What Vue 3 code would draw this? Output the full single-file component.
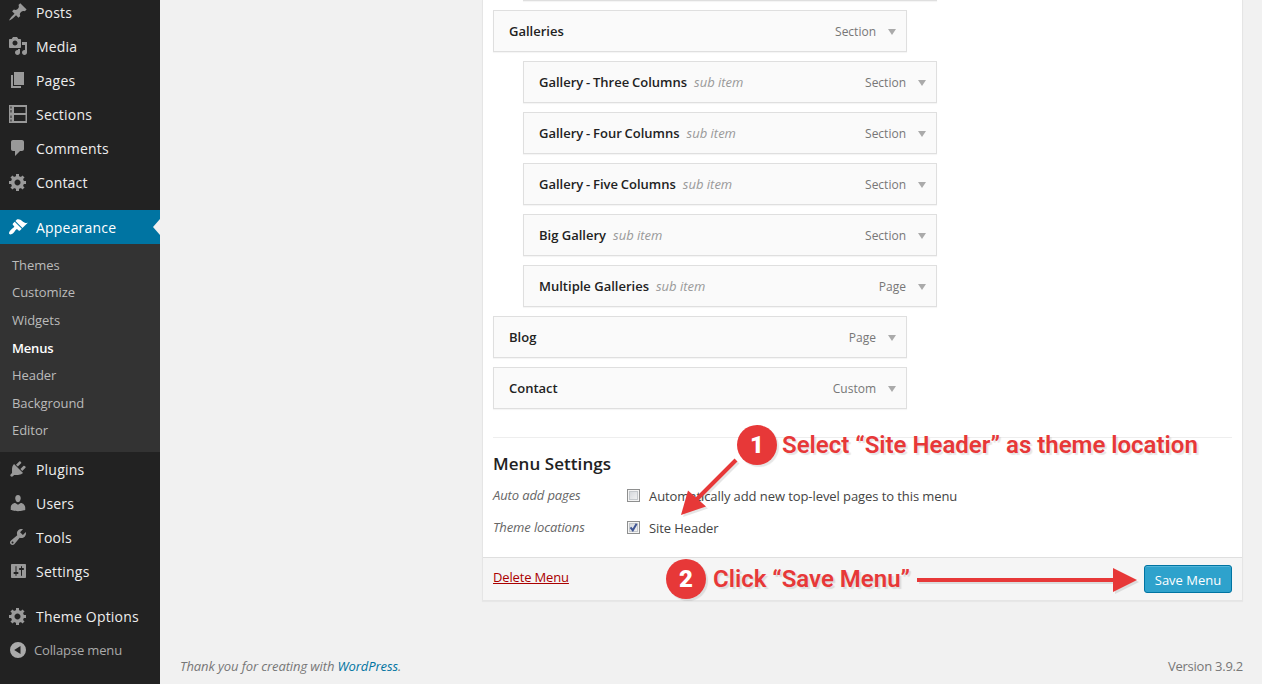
<script setup>
const icons = {
  pin: 'M10.44 3.02l1.82-1.82 6.36 6.35-1.83 1.82c-1.05-.68-2.48-.57-3.41.36l-.75.75c-.92.93-1.04 2.35-.35 3.41l-1.83 1.82-2.41-2.41-2.8 2.79c-.42.42-3.38 2.71-3.8 2.29s1.86-3.39 2.28-3.81l2.79-2.79L4.1 9.36l1.83-1.82c1.05.69 2.48.57 3.4-.36l.75-.75c.93-.92 1.05-2.35.36-3.41z',
  media: 'M13 11V4c0-.55-.45-1-1-1h-1.67L9 1H5L3.67 3H2c-.55 0-1 .45-1 1v7c0 .55.45 1 1 1h10c.55 0 1-.45 1-1zM7 4.5c1.38 0 2.5 1.12 2.5 2.5S8.38 9.5 7 9.5 4.5 8.38 4.5 7 5.62 4.5 7 4.5zM14 6h5v10.5c0 1.38-1.12 2.5-2.5 2.5S14 17.88 14 16.5s1.12-2.5 2.5-2.5c.17 0 .34.02.5.05V9h-3V6zm-4 8.05V13h2v3.5c0 1.38-1.12 2.5-2.5 2.5S7 17.88 7 16.5 8.12 14 9.5 14c.17 0 .34.02.5.05z',
  page: 'M6 15V2h10v13H6zm-1 1h8v2H3V5h2v11z',
  sections: 'M1 1h18v18H1zM2.500 2.500v2h1v-2zM2.500 15.500v2h1v-2zM2.500 6v2.500h1v-2.500zM2.500 11.500v2.500h1v-2.500zM6 3v6h11.500v-6zM6 11v6h11.500v-6z',
  comment: 'M5 2h9c1.1 0 2 .9 2 2v7c0 1.1-.9 2-2 2h-2l-5 5v-5H5c-1.1 0-2-.9-2-2V4c0-1.1.9-2 2-2z',
  gear: 'M18 12h-2.18c-.17.7-.44 1.35-.81 1.93l1.54 1.54-2.1 2.1-1.54-1.54c-.58.36-1.23.63-1.91.79V19H8v-2.18c-.68-.16-1.33-.43-1.91-.79l-1.54 1.54-2.12-2.12 1.54-1.54c-.36-.58-.63-1.23-.79-1.91H1V9.03h2.17c.16-.7.44-1.35.8-1.94L2.43 5.55l2.1-2.1 1.54 1.54c.58-.37 1.24-.64 1.93-.81V2h3v2.18c.68.16 1.33.43 1.91.79l1.54-1.54 2.12 2.12-1.54 1.54c.36.59.64 1.24.8 1.94H18V12zm-8.5 1.5c1.66 0 3-1.34 3-3s-1.34-3-3-3-3 1.34-3 3 1.34 3 3 3z',
  brush: 'M14.48 11.06L7.41 3.99l1.5-1.5c.5-.56 2.3-.47 3.51.32 1.21.8 1.43 1.28 2.91 2.1 1.18.64 2.45 1.26 4.45.85zm-.71.71L6.7 4.7 4.93 6.47c-.39.39-.39 1.02 0 1.41l1.06 1.06c.39.39.39 1.03 0 1.42-.6.6-1.43 1.11-2.21 1.69-.35.26-.7.53-1.01.84C1.43 14.23.4 16.08 1.4 17.07c.99 1 2.84-.03 4.18-1.36.31-.31.58-.66.85-1.02.57-.78 1.08-1.61 1.69-2.21.39-.39 1.02-.39 1.41 0l1.06 1.06c.39.39 1.02.39 1.41 0z',
  plug: 'M13.11 4.36L9.87 7.6 8 5.73l3.24-3.24c.35-.34 1.05-.2 1.56.32.52.51.66 1.21.31 1.55zm-8 1.77l.91-1.12 9.01 9.01-1.19.84c-.71.71-2.63 1.16-3.82 1.16H6.14L4.9 17.26c-.59.59-1.54.59-2.12 0-.59-.58-.59-1.53 0-2.12l1.24-1.24v-3.88c0-1.13.4-3.19 1.09-3.89zm7.26 3.97l3.24-3.24c.34-.35 1.04-.21 1.55.31.52.51.66 1.21.31 1.55l-3.24 3.25z',
  user: 'M10 9.25c-2.27 0-2.73-3.44-2.73-3.44C7 4.02 7.82 2 9.97 2c2.16 0 2.98 2.02 2.71 3.81 0 0-.41 3.44-2.68 3.44zm0 2.57L12.72 10c2.39 0 4.52 2.33 4.52 4.53v2.49s-3.65 1.13-7.24 1.13c-3.65 0-7.24-1.13-7.24-1.13v-2.49c0-2.25 1.94-4.48 4.47-4.48z',
  wrench: 'M16.68 9.77c-1.34 1.34-3.3 1.67-4.95.99l-5.41 6.52c-.99.99-2.59.99-3.58 0s-.99-2.59 0-3.57l6.52-5.42c-.68-1.65-.35-3.61.99-4.95 1.28-1.28 3.12-1.62 4.72-1.06l-2.89 2.89 2.82 2.82 2.86-2.87c.53 1.58.18 3.39-1.08 4.65zM3.81 16.21c.4.39 1.04.39 1.43 0 .4-.4.4-1.04 0-1.43-.39-.4-1.03-.4-1.43 0-.39.39-.39 1.03 0 1.43z',
  sliders: 'M18 16V4c0-.55-.45-1-1-1H4c-.55 0-1 .45-1 1v12c0 .55.45 1 1 1h13c.55 0 1-.45 1-1zM8.500 11h1c.55 0 1 .45 1 1s-.45 1-1 1H8.500v1.500c0 .28-.22.5-.5.5s-.5-.22-.5-.5V13H6.500c-.55 0-1-.45-1-1s.45-1 1-1h1V5.500c0-.28.22-.5.5-.5s.5.22.5.5V11zm4.500-2h-1c-.55 0-1-.45-1-1s.45-1 1-1h1V5.500c0-.28.22-.5.5-.5s.5.22.5.5V7h1c.55 0 1 .45 1 1s-.45 1-1 1h-1v5.500c0 .28-.22.5-.5.5s-.5-.22-.5-.5V9z',
  collapse: 'M10 2a8 8 0 1 1 0 16a8 8 0 1 1 0-16zM12.500 6L6.200 10L12.500 14z',
}

const groups = [
  [
    { label: 'Posts', icon: 'pin' },
    { label: 'Media', icon: 'media' },
    { label: 'Pages', icon: 'page' },
    { label: 'Sections', icon: 'sections' },
    { label: 'Comments', icon: 'comment' },
    { label: 'Contact', icon: 'gear' },
  ],
  [
    { label: 'Appearance', icon: 'brush', current: true },
    { label: 'Plugins', icon: 'plug' },
    { label: 'Users', icon: 'user' },
    { label: 'Tools', icon: 'wrench' },
    { label: 'Settings', icon: 'sliders' },
  ],
  [
    { label: 'Theme Options', icon: 'gear' },
    { label: 'Collapse menu', icon: 'collapse', muted: true },
  ],
]

const submenu = ['Themes', 'Customize', 'Widgets', 'Menus', 'Header', 'Background', 'Editor']

const items = [
  { title: 'Galleries', type: 'Section' },
  { title: 'Gallery - Three Columns', type: 'Section', sub: true },
  { title: 'Gallery - Four Columns', type: 'Section', sub: true },
  { title: 'Gallery - Five Columns', type: 'Section', sub: true },
  { title: 'Big Gallery', type: 'Section', sub: true },
  { title: 'Multiple Galleries', type: 'Page', sub: true },
  { title: 'Blog', type: 'Page' },
  { title: 'Contact', type: 'Custom' },
]
</script>

<template>
  <div class="screen">
    <nav class="sidebar">
      <div v-for="(group, g) in groups" :key="g" class="group">
        <template v-for="item in group" :key="item.label">
          <a class="nav-item" :class="{ current: item.current, muted: item.muted }">
            <svg class="icon" viewBox="0 0 20 20"><path :d="icons[item.icon]" fill-rule="evenodd" /></svg>
            <span>{{ item.label }}</span>
          </a>
          <div v-if="item.current" class="submenu">
            <a v-for="s in submenu" :key="s" :class="{ active: s === 'Menus' }">{{ s }}</a>
          </div>
        </template>
      </div>
    </nav>

    <main class="content">
      <section class="panel">
        <div class="panel-body">
          <div class="menu-item sub previous"></div>
          <div v-for="item in items" :key="item.title" class="menu-item" :class="{ sub: item.sub }">
            <span class="title" :class="{ dashed: item.title.includes(' - ') }">{{ item.title }}</span>
            <span v-if="item.sub" class="sub-label">sub item</span>
            <span class="type">{{ item.type }}</span>
            <svg class="caret" viewBox="0 0 8 6"><path d="M0 0h8L4 6z" /></svg>
          </div>
          <div class="settings">
            <h3>Menu Settings</h3>
            <div class="setting">
              <span class="setting-name">Auto add pages</span>
              <span class="checkbox"></span>
              <span class="setting-label">Automatically add new top-level pages to this menu</span>
            </div>
            <div class="setting">
              <span class="setting-name">Theme locations</span>
              <span class="checkbox">
                <svg viewBox="0 0 9 9"><path d="M1.500 4.300L3.800 7.300L7.600 .8" /></svg>
              </span>
              <span class="setting-label">Site Header</span>
            </div>
          </div>
        </div>
        <div class="panel-footer">
          <a class="delete">Delete Menu</a>
          <button class="save">Save Menu</button>
        </div>
      </section>
      <footer class="page-footer">
        <span class="thanks">Thank you for creating with <a>WordPress</a>.</span>
        <span class="version">Version 3.9.2</span>
      </footer>
    </main>

    <div class="step step-one"><b class="badge">1</b><span>Select “Site Header” as theme location</span></div>
    <div class="step step-two"><b class="badge">2</b><span>Click “Save Menu”</span></div>
    <svg class="arrows" viewBox="0 0 1262 684">
      <path d="M736 460L694 502" class="shaft" />
      <path d="M681 515L688 490.500L706 506.500z" />
      <path d="M917 580H1114" class="shaft" />
      <path d="M1137 580L1113 568V592z" />
    </svg>
  </div>
</template>

<style>
body {
  background: #f1f1f1;
  overflow: hidden;
}
</style>

<style scoped>
.screen {
  position: relative;
  display: flex;
  width: 1262px;
  height: 684px;
  overflow: hidden;
  font-family: "Open Sans", sans-serif;
  font-size: 13px;
  color: #444;
  background: #f1f1f1;
}
.sidebar {
  flex: none;
  width: 160px;
  height: 689px;
  margin-top: -5px;
  background: #222;
  display: flex;
  flex-direction: column;
  gap: 11px;
}
.nav-item {
  display: flex;
  align-items: center;
  gap: 8px;
  height: 34px;
  padding-left: 8px;
  box-sizing: border-box;
  font-size: 14px;
  letter-spacing: 0.2px;
  color: #eee;
  position: relative;
}
.icon {
  width: 20px;
  height: 20px;
  fill: #999;
}
.nav-item.current {
  background: #0074a2;
  color: #fff;
}
.nav-item.current .icon {
  fill: #fff;
}
.nav-item.current::after {
  content: "";
  position: absolute;
  right: 0;
  top: 9px;
  border: 8px solid transparent;
  border-left: 0;
  border-right: 7px solid #f1f1f1;
}
.nav-item.muted {
  font-size: 13px;
  letter-spacing: -0.15px;
  color: #aaa;
  gap: 6px;
  height: 33px;
}
.nav-item.muted .icon {
  fill: #aaa;
}
.submenu {
  height: 208px;
  box-sizing: border-box;
  padding: 7px 12px 8px;
  background: #333;
  display: flex;
  flex-direction: column;
}
.submenu a {
  flex: 1;
  display: flex;
  align-items: center;
  letter-spacing: -0.05px;
  color: #bbb;
}
.submenu a.active {
  color: #fff;
  font-weight: 600;
  letter-spacing: -0.2px;
}
.content {
  flex: 1;
  padding: 0 19px 0 20px;
  display: flex;
  flex-direction: column;
}
.panel {
  margin-left: 302px;
  height: 601px;
  box-sizing: border-box;
  border: 1px solid #e5e5e5;
  border-top: 0;
  background: #fff;
  box-shadow: 0 1px 1px rgba(0, 0, 0, 0.04);
  display: flex;
  flex-direction: column;
}
.panel-body {
  flex: 1;
  padding: 0 10px;
}
.menu-item {
  width: 414px;
  height: 42px;
  box-sizing: border-box;
  margin-bottom: 9px;
  padding: 0 10px 0 15px;
  border: 1px solid #dfdfdf;
  background: #fafafa;
  box-shadow: 0 1px 1px rgba(0, 0, 0, 0.04);
  display: flex;
  align-items: center;
}
.menu-item.sub {
  margin-left: 30px;
}
.menu-item.previous {
  margin-top: -41px;
}
.title {
  font-weight: 600;
  color: #222;
}
.title.dashed {
  word-spacing: -0.6px;
}
.sub-label {
  margin-left: 7px;
  font-style: italic;
  color: #999;
}
.type {
  margin-left: auto;
  font-size: 12px;
  color: #777;
  padding-top: 1px;
}
.caret {
  width: 8px;
  height: 6px;
  margin: 1px 0 0 12px;
  fill: #aaa;
}
.settings {
  margin-top: 28px;
  border-top: 1px solid #eee;
  padding-top: 13px;
}
h3 {
  margin: 0 0 3px;
  font-size: 17px;
  line-height: 26px;
  font-weight: 600;
  letter-spacing: 0.06px;
  color: #222;
}
.setting {
  display: flex;
  align-items: center;
  height: 32px;
}
.setting-name {
  width: 134px;
  padding-bottom: 2px;
  font-style: italic;
  letter-spacing: -0.12px;
  color: #666;
}
.checkbox {
  width: 13px;
  height: 13px;
  box-sizing: border-box;
  border: 1px solid #8e8f8f;
  box-shadow: inset 0 0 0 1px #f4f4f4, inset 0 0 0 2px #c4c8cc;
  background: linear-gradient(135deg, #cfd3d8, #f6f6f6);
  display: flex;
  align-items: center;
  justify-content: center;
  position: relative;
  top: -1px;
}
.checkbox svg {
  width: 9px;
  height: 9px;
  fill: none;
  stroke: #3f5594;
  stroke-width: 2;
}
.setting-label {
  margin-left: 9px;
  letter-spacing: -0.08px;
}
.panel-footer {
  height: 43px;
  box-sizing: border-box;
  padding: 0 10px;
  border-top: 1px solid #dfdfdf;
  background: #f5f5f5;
  display: flex;
  align-items: center;
  justify-content: space-between;
}
.delete {
  color: #a00;
  text-decoration: underline;
  letter-spacing: -0.15px;
  padding-bottom: 4px;
}
.save {
  width: 88px;
  height: 28px;
  padding: 2px 0 0;
  border: 1px solid #0074a2;
  border-radius: 3px;
  background: #2ea2cc;
  box-shadow: inset 0 1px 0 rgba(120, 200, 230, 0.5);
  color: #fff;
  font: 13px "Open Sans", sans-serif;
}
.page-footer {
  display: flex;
  justify-content: space-between;
  margin-top: 56px;
  color: #777;
}
.thanks {
  font-style: italic;
  letter-spacing: -0.1px;
}
.thanks a {
  color: #0074a2;
}
.version {
  letter-spacing: -0.24px;
}
.step {
  position: absolute;
  display: flex;
  align-items: center;
  height: 40px;
  font: 600 24px Roboto, sans-serif;
  color: #e73838;
  white-space: nowrap;
  text-shadow: 2px 2px 1px rgba(0, 0, 0, 0.1);
}
.step-one {
  left: 737px;
  top: 425px;
  gap: 5px;
}
.step-two {
  left: 666px;
  top: 559px;
  gap: 7px;
}
.badge {
  width: 40px;
  height: 40px;
  border-radius: 50%;
  background: #e73838;
  color: #fff;
  line-height: 40px;
  text-align: center;
  text-shadow: none;
  box-shadow: 2px 2px 1px rgba(0, 0, 0, 0.1);
}
.arrows {
  position: absolute;
  left: 0;
  top: 0;
  width: 1262px;
  height: 684px;
  fill: #e73838;
  pointer-events: none;
  filter: drop-shadow(2px 2px 0.5px rgba(0, 0, 0, 0.1));
}
.shaft {
  stroke: #e73838;
  stroke-width: 4;
}
</style>
